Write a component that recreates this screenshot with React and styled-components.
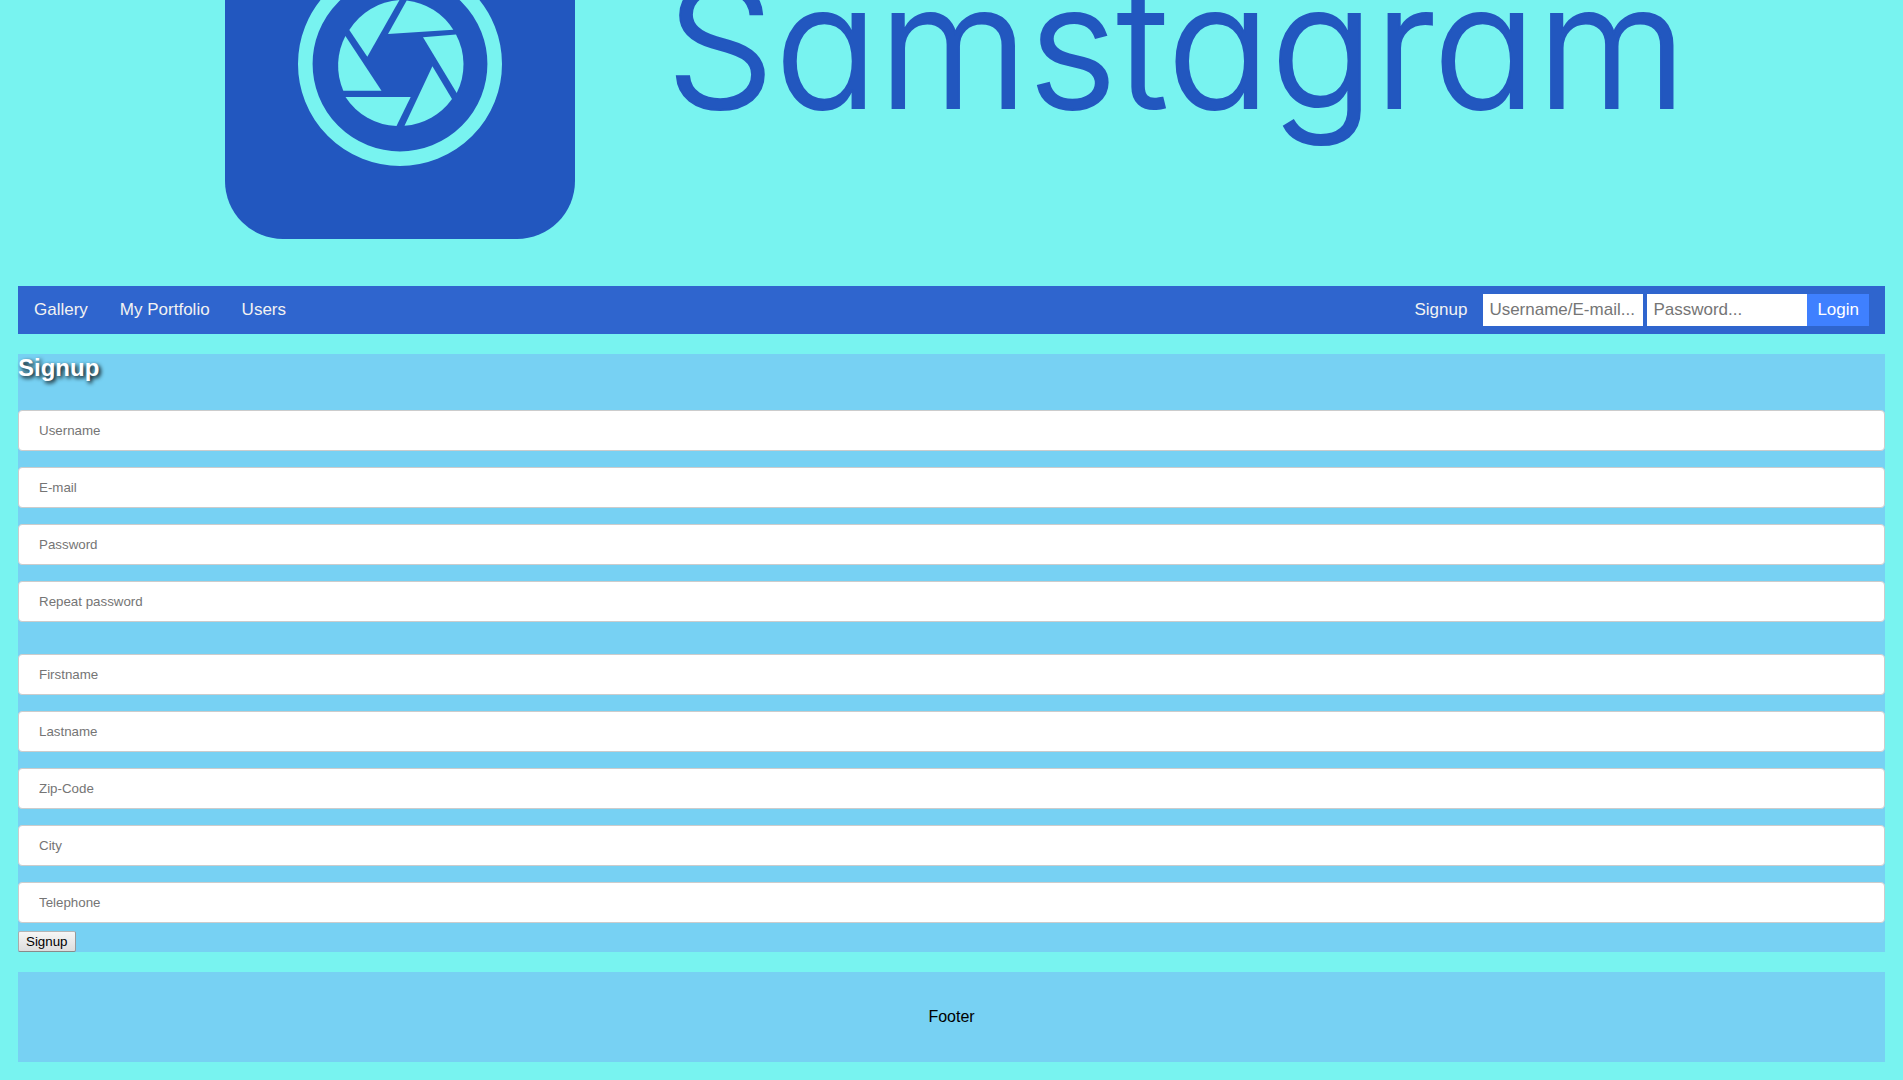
import React from "react";
import styled, { createGlobalStyle } from "styled-components";

const colors = {
  page: "#78f3f0",
  logo: "#2257bf",
  nav: "#2f65ce",
  panel: "#77d1f3",
  login: "#3f80ff",
};

const GlobalStyle = createGlobalStyle`
  * { box-sizing: border-box; }
  body {
    margin: 0;
    background: ${colors.page};
    font-family: Arial, "Liberation Sans", sans-serif;
    font-size: 16px;
  }
`;

const Page = styled.div`
  padding: 0 18px 18px;
`;

const Logo = styled.svg`
  display: block;
  width: 100%;
  height: auto;
`;

const Wordmark = styled.text`
  font-family: Inter, Lato, sans-serif;
  font-size: 172px;
  font-weight: 300;
  font-feature-settings: "cv11" 1;
  fill: ${colors.logo};
  stroke: ${colors.logo};
  stroke-width: 2px;
`;

const NavBar = styled.nav`
  display: flex;
  align-items: center;
  justify-content: space-between;
  min-height: 48px;
  background: ${colors.nav};
`;

const NavGroup = styled.div`
  display: flex;
  align-items: center;
`;

const NavLink = styled.a`
  padding: 14px 16px;
  color: #f2f2f2;
  font-size: 17px;
  line-height: 20px;
  text-decoration: none;
`;

const LoginForm = styled.form`
  display: flex;
  align-items: center;
  margin-right: 16px;
`;

const LoginInput = styled.input`
  width: 160px;
  height: 32px;
  margin: 0 ${(p) => (p.$spaced ? "4px" : "0")} 0 0;
  padding: 6px;
  border: 0;
  border-radius: 0;
  background: #fff;
  font-family: inherit;
  font-size: 17px;
`;

const LoginButton = styled.button`
  height: 32px;
  padding: 6px 10px;
  border: 0;
  background: ${colors.login};
  color: #fff;
  font-family: inherit;
  font-size: 17px;
  line-height: 20px;
`;

const Panel = styled.main`
  margin-top: 20px;
  background: ${colors.panel};
`;

const Title = styled.h2`
  margin: 0 0 28px;
  color: #fff;
  font-size: 24px;
  line-height: 28px;
  text-shadow: 2px 2px 4px #000;
`;

const SignupForm = styled.form`
  display: flex;
  flex-direction: column;
  align-items: flex-start;
`;

const Fields = styled.div`
  display: flex;
  flex-direction: column;
  gap: 16px;
  width: 100%;
  margin-bottom: ${(p) => p.$after};
`;

const Field = styled.input`
  width: 100%;
  height: 41px;
  margin: 0;
  padding: 12px 20px;
  border: 1px solid #ccc;
  border-radius: 4px;
  background: #fff;
  font-family: inherit;
`;

const SubmitButton = styled.button`
  height: 21px;
  padding: 1px 7px;
  border: 1px solid;
  border-color: #b5b5b5 #999 #8a8a8a #aaa;
  border-radius: 2px;
  background: linear-gradient(#f6f6f6, #dddddd);
  color: #000;
  font-family: inherit;
`;

const Footer = styled.footer`
  margin-top: 20px;
  padding: 36px 0;
  background: ${colors.panel};
  color: #000;
  line-height: 18px;
  text-align: center;
`;

const accountFields = [
  { name: "username", label: "Username" },
  { name: "email", label: "E-mail" },
  { name: "password", label: "Password", type: "password" },
  { name: "repeat", label: "Repeat password", type: "password" },
];

const personFields = [
  { name: "firstname", label: "Firstname" },
  { name: "lastname", label: "Lastname" },
  { name: "zip", label: "Zip-Code" },
  { name: "city", label: "City" },
  { name: "phone", label: "Telephone" },
];

const blades = [
  "M399.5 0 L367.3 56.7 L349.3 30 A63.5 63.5 0 0 1 399.5 0Z",
  "M406.7 0.5 A63.5 63.5 0 0 1 453.3 29.8 L388 34Z",
  "M456 34.5 A63.5 63.5 0 0 1 456.7 93 L423 37.3Z",
  "M432.4 66.3 L452 99 A63.5 63.5 0 0 1 404.5 125.7Z",
  "M410.7 97 L396.5 126 A63.5 63.5 0 0 1 345.5 97Z",
  "M345.4 36 L381.5 90.7 L343.3 90.7 A63.5 63.5 0 0 1 345.4 36Z",
];

function BrandLogo() {
  return (
    <Logo viewBox="18 0 1867 286" role="img" aria-label="Samstagram">
      <rect x="225" y="-111" width="350" height="350" rx="58" fill={colors.logo} />
      <circle cx="400" cy="64" r="94.7" fill="none" stroke={colors.page} strokeWidth="14.6" />
      {blades.map((d) => (
        <path key={d} d={d} fill={colors.page} />
      ))}
      <Wordmark x="666" y="108">Samstagram</Wordmark>
    </Logo>
  );
}

function FieldGroup({ fields, after }) {
  return (
    <Fields $after={after}>
      {fields.map(({ name, label, type = "text" }) => (
        <Field key={name} name={name} type={type} placeholder={label} aria-label={label} />
      ))}
    </Fields>
  );
}

export default function App() {
  return (
    <>
      <GlobalStyle />
      <Page>
        <header>
          <BrandLogo />
          <NavBar>
            <NavGroup>
              <NavLink href="#gallery">Gallery</NavLink>
              <NavLink href="#portfolio">My Portfolio</NavLink>
              <NavLink href="#users">Users</NavLink>
            </NavGroup>
            <NavGroup>
              <NavLink href="#signup">Signup</NavLink>
              <LoginForm>
                <LoginInput $spaced type="text" placeholder="Username/E-mail..." aria-label="Username or e-mail" />
                <LoginInput type="password" placeholder="Password..." aria-label="Password" />
                <LoginButton type="button">Login</LoginButton>
              </LoginForm>
            </NavGroup>
          </NavBar>
        </header>
        <Panel>
          <Title>Signup</Title>
          <SignupForm>
            <FieldGroup fields={accountFields} after="32px" />
            <FieldGroup fields={personFields} after="8px" />
            <SubmitButton type="button">Signup</SubmitButton>
          </SignupForm>
        </Panel>
        <Footer>Footer</Footer>
      </Page>
    </>
  );
}
